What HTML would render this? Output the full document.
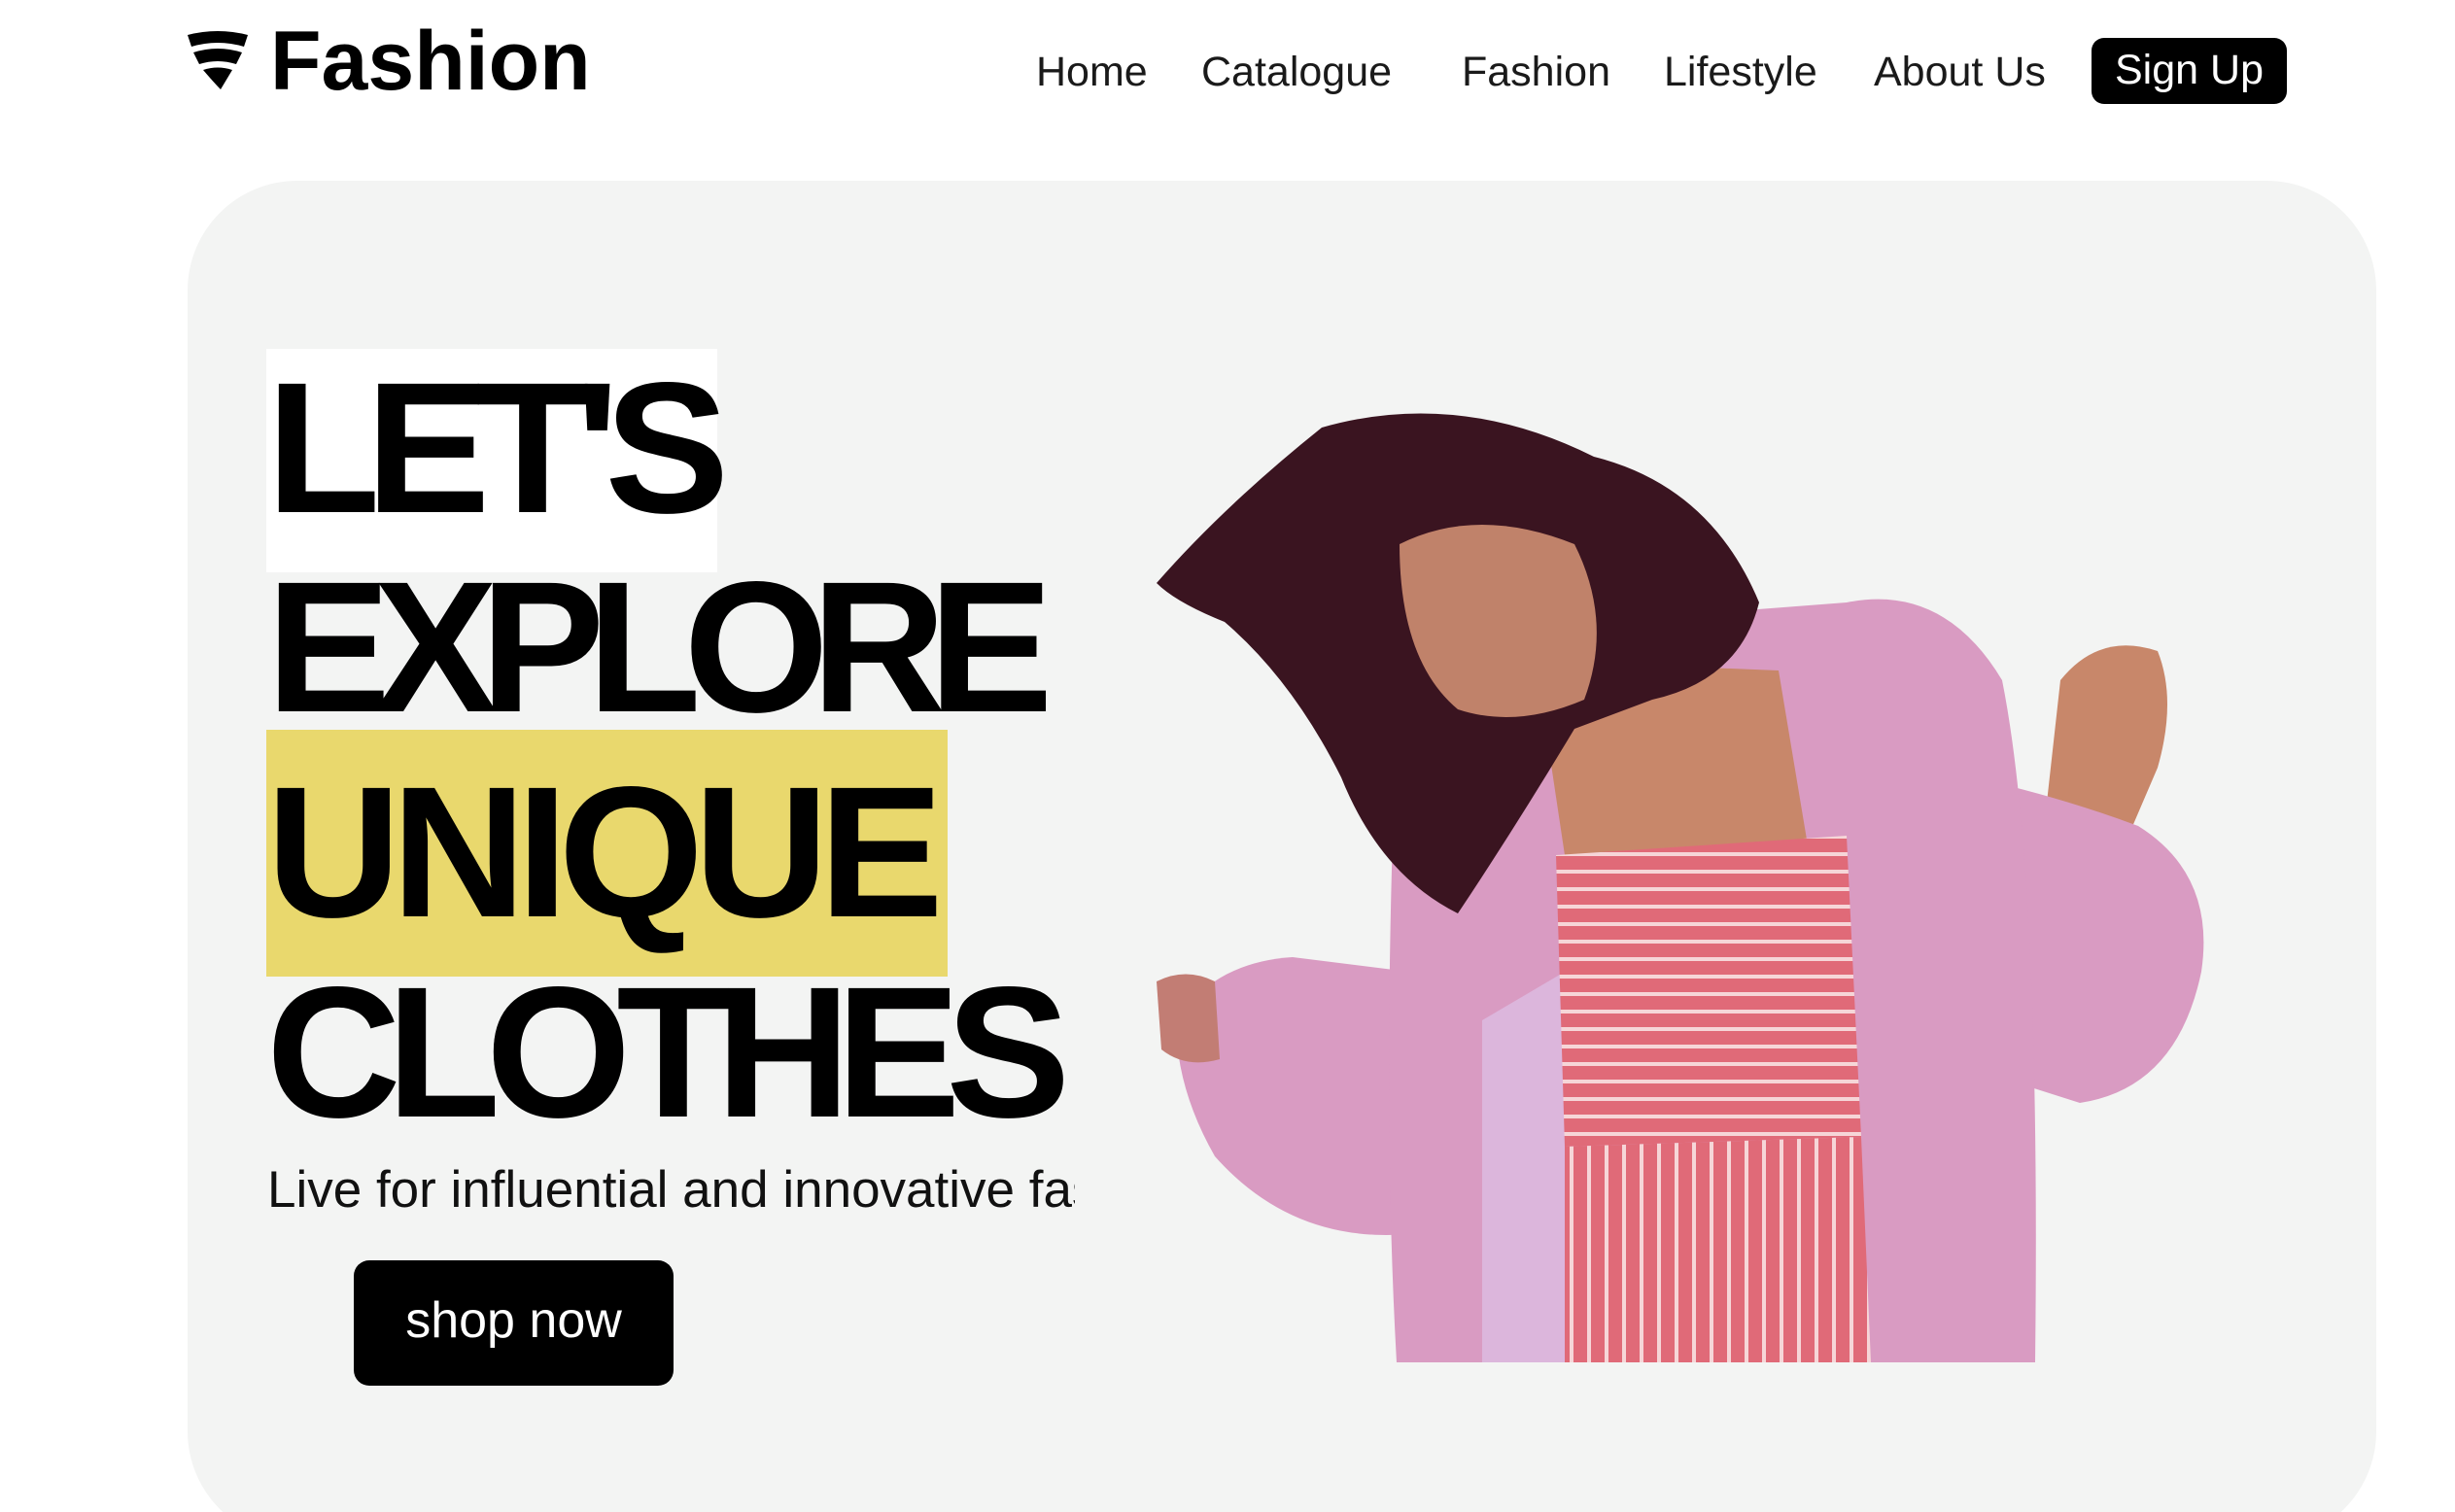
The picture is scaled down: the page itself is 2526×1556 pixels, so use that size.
<!DOCTYPE html>
<html style="overflow:hidden"><head><meta charset="utf-8"><style>
*{margin:0;padding:0;box-sizing:border-box}
html,body{width:2526px;height:1556px;overflow:hidden}
body{background:#fff;position:relative;font-family:"Liberation Sans",sans-serif;color:#111}
#w{position:absolute;left:0;top:0;width:2526px;height:1556px;overflow:hidden}
.a{position:absolute;white-space:nowrap}
.nav{font-size:43px;top:50px;color:#1a1a1a}
.big{font-weight:900;font-size:192px;letter-spacing:-18px;color:#000;left:274px;line-height:1}
</style></head><body><div id="w">
<svg class="a" style="left:191px;top:32px" width="66" height="62" viewBox="0 0 66 62">
<path d="M2 4 Q33 -4 64 4 L60 16 Q33 8 6 16 Z" fill="#000"/>
<path d="M8 22 Q33 14 58 22 L52 34 Q33 28 14 34 Z" fill="#000"/>
<path d="M18 40 Q33 35 48 40 L36 60 Q30 54 18 40 Z" fill="#000"/>
</svg>
<div class="a" style="left:278px;top:14px;font-size:86px;font-weight:bold;color:#000">Fashion</div>
<div class="a nav" style="left:1066px">Home</div>
<div class="a nav" style="left:1236px">Catalogue</div>
<div class="a nav" style="left:1504px">Fashion</div>
<div class="a nav" style="left:1712px">Lifestyle</div>
<div class="a nav" style="left:1928px">About Us</div>
<div class="a" style="left:2152px;top:39px;width:201px;height:68px;background:#000;border-radius:13px;color:#fff;font-size:43px;text-align:center;line-height:66px">Sign Up</div>
<div class="a" style="left:193px;top:186px;width:2252px;height:1400px;background:#f3f4f3;border-radius:113px"></div>
<div class="a" style="left:274px;top:359px;width:464px;height:230px;background:#fff"></div>
<div class="a" style="left:274px;top:751px;width:701px;height:254px;background:#e9d86d"></div>
<div class="a big" style="top:365px;letter-spacing:-15px">LET'S</div>
<div class="a big" style="top:570px">EXPLORE</div>
<div class="a big" style="top:781px;letter-spacing:-10px">UNIQUE</div>
<div class="a big" style="top:987px;letter-spacing:-15px">CLOTHES</div>
<div class="a" style="left:275px;top:1194px;width:831px;overflow:hidden;font-size:53px;color:#111">Live for influential and innovative fashion</div>
<div class="a" style="left:364px;top:1297px;width:329px;height:129px;background:#000;border-radius:16px;color:#fff;font-size:52px;text-align:center;line-height:124px">shop now</div>
<svg class="a" style="left:0;top:0" width="2526" height="1556">
<defs><pattern id="st" width="20" height="18" patternUnits="userSpaceOnUse"><rect width="20" height="18" fill="#e06a78"/><rect y="13" width="20" height="4" fill="#f6d6d8"/></pattern>
<pattern id="sv" width="18" height="20" patternUnits="userSpaceOnUse"><rect width="18" height="20" fill="#e06a78"/><rect x="13" width="4" height="20" fill="#f6d6d8"/></pattern></defs>
<path d="M1210 1050 Q1250 990 1330 985 L1450 1000 L1450 1270 Q1330 1280 1250 1190 Q1210 1120 1210 1050Z" fill="#d99bc2"/>
<path d="M1190 1010 Q1220 995 1250 1010 L1255 1090 Q1220 1100 1195 1080Z" fill="#c27d74"/>
<path d="M2100 880 L2120 700 Q2160 650 2220 670 Q2240 720 2220 790 L2190 860Z" fill="#c8876a"/>
<path d="M2030 800 Q2120 820 2200 850 Q2280 900 2265 1000 Q2240 1120 2140 1135 L2030 1100Z" fill="#d99bc2"/>
<path d="M1440 680 Q1540 600 1640 640 L1900 620 Q2000 600 2060 700 Q2100 900 2094 1402 L1437 1402 Q1420 1100 1440 680Z" fill="#d99bc2"/>
<path d="M1525 1050 L1610 1000 L1620 1402 L1525 1402Z" fill="#dcb6dc"/>
<path d="M1580 680 L1830 690 L1860 870 L1610 880Z" fill="#c8876a"/>
<path d="M1601 880 L1900 860 L1915 1170 L1610 1180Z" fill="url(#st)"/>
<path d="M1610 1180 L1915 1170 L1925 1402 L1610 1402Z" fill="url(#sv)"/>
<path d="M1190 600 Q1260 520 1360 440 Q1500 400 1640 470 Q1760 500 1810 620 Q1790 700 1700 720 L1620 750 Q1560 850 1500 940 Q1420 900 1380 800 Q1330 700 1260 640 Q1210 620 1190 600Z" fill="#3a1420"/>
<path d="M1440 560 Q1520 520 1620 560 Q1660 640 1630 720 Q1560 750 1500 730 Q1440 680 1440 560Z" fill="#c0826a"/>
</svg>
</div></body></html>
